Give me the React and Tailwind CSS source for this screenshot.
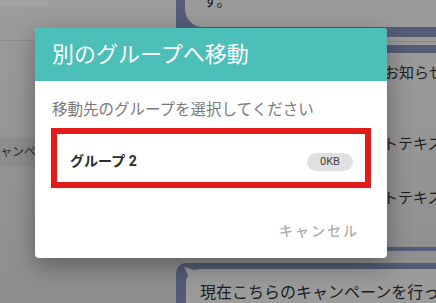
const font = "font-['Roboto','Noto_Sans_CJK_JP',sans-serif]";

const LeftColumn = () => (
  <div className="w-[176px] shrink-0 flex flex-col">
    <div className="w-[50px] h-[6px] bg-[#a3a3a3] rounded-br-[8px]" />
    <div className="h-[35px] border-b border-[#8a8a8a]" />
    <div className="h-[97px]" />
    <div className="h-[28px] bg-[#8d8d8d] flex items-center overflow-hidden">
      <span className="-ml-[12px] text-[12px] text-[#2c2c2c] whitespace-nowrap">
        キャンペーン一覧
      </span>
    </div>
  </div>
);

const RightColumn = () => (
  <div className="flex-1 flex flex-col">
    <div className="h-[32px] bg-[#555e76] pl-[9px]">
      <div className="h-[27px] bg-[#9b9b9b] rounded-bl-[18px] pl-[18px] overflow-hidden">
        <p className="-mt-[9px] text-[15px] leading-[20px] text-[#1c1c1c]">す。</p>
      </div>
    </div>
    <div className="h-[5px] bg-[#555e76]" />
    <div className="h-[5px] border-b border-[#8a8a8a]" />
    <div className="h-[3px]" />
    <div className="h-[8px] bg-[#555e76]" />
    <div className="pl-[208px] pt-[10px] text-[15px] leading-[20px] text-[#1c1c1c] whitespace-nowrap overflow-hidden">
      <p>お知らせ</p>
      <p className="mt-[51px] -ml-[1px]">トテキスト</p>
      <p className="mt-[34px] -ml-[1px]">トテキスト</p>
    </div>
    <div className="h-[41px]" />
    <div className="h-[4px] bg-[#555e76]" />
    <div className="h-[12px]" />
    <div className="flex-1 bg-[#535c74] rounded-tl-[10px] pl-[10px] pt-[6px]">
      <div className="relative h-full bg-[#9b9b9b] rounded-tl-[14px] pl-[14px] pt-[14px]">
        <svg
          className="absolute -left-[2px] -top-[2px]"
          width="14"
          height="16"
          viewBox="0 0 14 16"
        >
          <path d="M0 0 L14 4 L8 16 Z" fill="#9b9b9b" />
        </svg>
        <p className="text-[16px] leading-[20px] text-[#1c1c1c] whitespace-nowrap overflow-hidden">
          現在こちらのキャンペーンを行っています
        </p>
      </div>
    </div>
  </div>
);

const MoveDialog = () => (
  <div className="absolute left-[35px] top-[28px] w-[352px] h-[230px] bg-white rounded-[4px] overflow-hidden shadow-[0_8px_24px_rgba(0,0,0,0.35)]">
    <div className="h-[53px] bg-[#4bbfb8] flex items-center pl-[17px]">
      <p className="text-white text-[22px] leading-[28px]">別のグループへ移動</p>
    </div>
    <div className="px-[16px]">
      <p className="pt-[19px] pl-[1px] text-[15.5px] leading-[20px] text-[#7a7a7a]">
        移動先のグループを選択してください
      </p>
      <div className="mt-[8px] h-[60px] border-[6px] border-[#e31b1b] flex items-center justify-between pl-[13px] pr-[12px] pt-[7px]">
        <span className="text-[14px] font-bold text-[#2a2a2a]">グループ 2</span>
        <span className="w-[46px] h-[18px] rounded-full bg-[#e0e0e0] text-[11px] leading-[18px] text-[#444] text-center">
          0KB
        </span>
      </div>
      <div className="mt-[33px] flex justify-end pr-[12px]">
        <button className="text-[14px] leading-[20px] tracking-[2px] font-medium text-[#adadad]">
          キャンセル
        </button>
      </div>
    </div>
  </div>
);

export default function App() {
  return (
    <div
      className={`relative w-[436px] h-[303px] overflow-hidden bg-gradient-to-b from-[#9c9c9c] to-[#8e8e8e] ${font}`}
    >
      <div className="flex h-full">
        <LeftColumn />
        <RightColumn />
      </div>
      <MoveDialog />
    </div>
  );
}
